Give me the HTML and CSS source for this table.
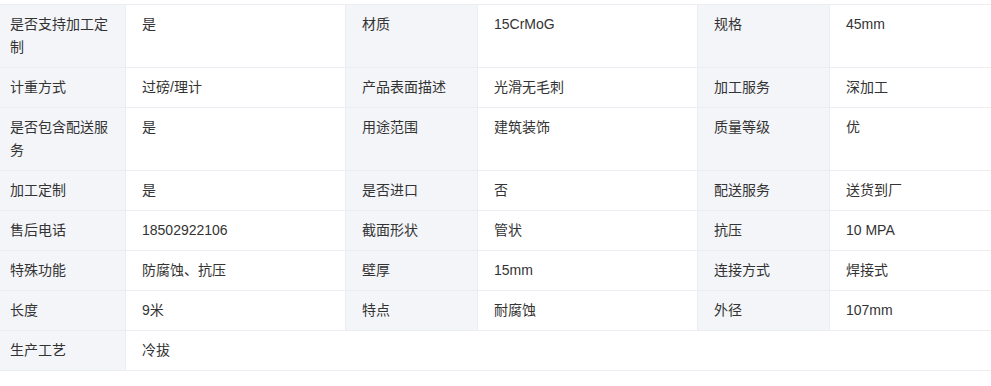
FILE: index.html
```html
<!DOCTYPE html>
<html lang="zh-CN">
<head>
<meta charset="utf-8">
<title>商品参数</title>
<link rel="stylesheet" href="styles.css">
</head>
<body>
<div class="viewport">
  <div class="specs">
    <div class="k">是否支持加工定制</div><div class="v">是</div>
    <div class="k">材质</div><div class="v">15CrMoG</div>
    <div class="k">规格</div><div class="v">45mm</div>

    <div class="k">计重方式</div><div class="v">过磅/理计</div>
    <div class="k">产品表面描述</div><div class="v">光滑无毛刺</div>
    <div class="k">加工服务</div><div class="v">深加工</div>

    <div class="k">是否包含配送服务</div><div class="v">是</div>
    <div class="k">用途范围</div><div class="v">建筑装饰</div>
    <div class="k">质量等级</div><div class="v">优</div>

    <div class="k">加工定制</div><div class="v">是</div>
    <div class="k">是否进口</div><div class="v">否</div>
    <div class="k">配送服务</div><div class="v">送货到厂</div>

    <div class="k">售后电话</div><div class="v">18502922106</div>
    <div class="k">截面形状</div><div class="v">管状</div>
    <div class="k">抗压</div><div class="v">10 MPA</div>

    <div class="k">特殊功能</div><div class="v">防腐蚀、抗压</div>
    <div class="k">壁厚</div><div class="v">15mm</div>
    <div class="k">连接方式</div><div class="v">焊接式</div>

    <div class="k">长度</div><div class="v">9米</div>
    <div class="k">特点</div><div class="v">耐腐蚀</div>
    <div class="k">外径</div><div class="v">107mm</div>

    <div class="k">生产工艺</div><div class="v wide">冷拔</div>
  </div>
</div>
</body>
</html>
```
FILE: styles.css
```css
html, body {
  margin: 0;
  padding: 0;
  background: #ffffff;
}
body {
  font-family: "Liberation Sans", "Noto Sans CJK SC", sans-serif;
  font-size: 14px;
  color: #333333;
}
.viewport {
  width: 991px;
  height: 386px;
  overflow: hidden;
  padding-top: 4px;
  box-sizing: border-box;
}
.specs {
  display: grid;
  grid-template-columns: 131px 219px 131px 219px 131px 219px;
  gap: 1px;
  width: max-content;
  margin-left: -7px;
  background: #ebedf2;
  border: 1px solid #ebedf2;
}
.k, .v {
  padding: 8px 16px;
  line-height: 23px;
  word-break: break-all;
}
.k {
  background: #f4f5f9;
}
.v {
  background: #ffffff;
}
.wide {
  grid-column: span 5;
}
```
